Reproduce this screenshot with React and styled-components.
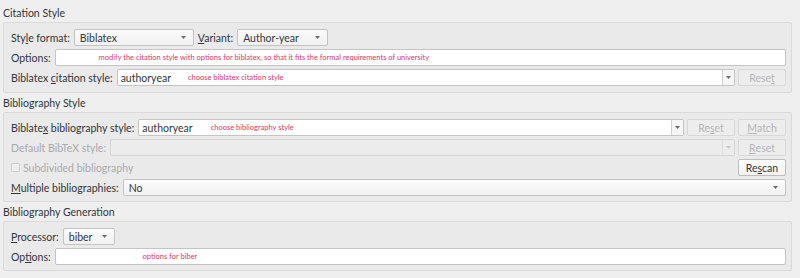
import React from 'react';
import styled, { createGlobalStyle } from 'styled-components';

const GlobalStyle = createGlobalStyle`
    body {
        margin: 0;
        background: #efefef;
        font-family: "Lato", "Noto Sans", sans-serif;
        font-size: 10.5px;
        color: #31363b;
    }
`

const Arrow = ({ disabled }) => (
    <svg width="5" height="3" viewBox="0 0 5 3">
        <path d="M0 0 L5 0 L2.5 3 Z" fill={disabled ? '#c8c8c8' : '#6a6a6a'} />
    </svg>
)

export default function App() {
    return (
        <Page>
            <GlobalStyle />
            <Title first>Citation Style</Title>
            <Group>
                <Row>
                    <Label>Sty<U>l</U>e format:</Label>
                    <Combo width={120}>
                        <span>Biblatex</span>
                        <Arrow />
                    </Combo>
                    <Label lead={1}><U>V</U>ariant:</Label>
                    <Combo width={91}>
                        <span>Author-year</span>
                        <Arrow />
                    </Combo>
                </Row>
                <Row>
                    <Label>Opt<U>i</U>ons:</Label>
                    <Edit>
                        <Hint offset={43}>modify the citation style with options for biblatex, so that it fits the formal requirements of university</Hint>
                    </Edit>
                </Row>
                <Row>
                    <Label>Biblatex <U>c</U>itation style:</Label>
                    <EditCombo>
                        <Value>authoryear</Value>
                        <Hint offset={17}>choose biblatex citation style</Hint>
                        <Drop><Arrow /></Drop>
                    </EditCombo>
                    <Button disabled>Rese<U>t</U></Button>
                </Row>
            </Group>

            <Title>Bibliography Style</Title>
            <Group>
                <Row>
                    <Label>Biblate<U>x</U> bibliography style:</Label>
                    <EditCombo>
                        <Value>authoryear</Value>
                        <Hint offset={18}>choose bibliography style</Hint>
                        <Drop><Arrow /></Drop>
                    </EditCombo>
                    <Button disabled>Re<U>s</U>et</Button>
                    <Button disabled><U>M</U>atch</Button>
                </Row>
                <Row>
                    <Label disabled>Default BibTeX style:</Label>
                    <EditCombo disabled>
                        <Drop disabled><Arrow disabled /></Drop>
                    </EditCombo>
                    <Button disabled><U>R</U>eset</Button>
                </Row>
                <Row>
                    <Check>
                        <Box />
                        <span>Subdivided bibliography</span>
                    </Check>
                    <Spacer />
                    <Button>Re<U>s</U>can</Button>
                </Row>
                <Row>
                    <Label><U>M</U>ultiple bibliographies:</Label>
                    <Combo grow>
                        <span>No</span>
                        <Arrow />
                    </Combo>
                </Row>
            </Group>

            <Title>Bibliography Generation</Title>
            <Group>
                <Row>
                    <Label><U>P</U>rocessor:</Label>
                    <Combo width={52}>
                        <span>biber</span>
                        <Arrow />
                    </Combo>
                </Row>
                <Row>
                    <Label>Op<U>t</U>ions:</Label>
                    <Edit>
                        <Hint offset={87}>options for biber</Hint>
                    </Edit>
                </Row>
            </Group>
        </Page>
    )
}

const Page = styled.div`
    width: 800px;
    height: 278px;
    padding: 0 8px 0 3px;
    box-sizing: border-box;
    display: flex;
    flex-direction: column;
`
const Title = styled.div`
    height: 19px;
    margin-top: ${props => props.first ? 3 : 0}px;
    display: flex;
    align-items: center;
    font-size: 10.5px;
`
const Group = styled.div`
    background: #eaeaea;
    border: 1px solid #dadada;
    border-radius: 2px;
    padding: 6px 5px 5px 7px;
    display: flex;
    flex-direction: column;
    gap: 3px;
    &:nth-of-type(2) {
        padding-bottom: 6px;
    }
`
const Row = styled.div`
    height: 17px;
    display: flex;
    align-items: center;
    gap: 3px;
`
const Label = styled.span`
    white-space: nowrap;
    margin-left: ${props => props.lead || 0}px;
    margin-right: 1px;
    color: ${props => props.disabled ? '#a9abad' : '#31363b'};
`
const U = styled.span`
    text-decoration: underline;
    text-underline-offset: 1px;
`
const Combo = styled.div`
    height: 17px;
    box-sizing: border-box;
    width: ${props => props.grow ? 'auto' : props.width + 'px'};
    flex: ${props => props.grow ? 1 : 'none'};
    border: 1px solid #c4c4c4;
    border-radius: 2px;
    background: linear-gradient(#fbfbfb, #f1f1f1);
    display: flex;
    align-items: center;
    justify-content: space-between;
    padding: 0 7px 0 5px;
`
const Edit = styled.div`
    flex: 1;
    height: 17px;
    box-sizing: border-box;
    border: 1px solid #c4c4c4;
    border-radius: 2px;
    background: #ffffff;
    display: flex;
    align-items: center;
`
const EditCombo = styled.div`
    flex: 1;
    height: 17px;
    box-sizing: border-box;
    border: 1px solid ${props => props.disabled ? '#d6d6d6' : '#c4c4c4'};
    border-radius: 2px;
    background: ${props => props.disabled ? '#ececec' : '#ffffff'};
    display: flex;
    align-items: center;
    padding-left: 3px;
`
const Value = styled.span`
    font-size: 10.5px;
    color: #31363b;
`
const Hint = styled.span`
    margin-left: ${props => props.offset}px;
    font-size: 7.5px;
    color: #e4336c;
    white-space: nowrap;
`
const Drop = styled.div`
    margin-left: auto;
    width: 11px;
    height: 100%;
    border-left: 1px solid ${props => props.disabled ? '#dedede' : '#d0d0d0'};
    background: ${props => props.disabled ? '#ececec' : '#f6f6f6'};
    display: flex;
    align-items: center;
    justify-content: center;
`
const Button = styled.div`
    width: 48px;
    height: 17px;
    box-sizing: border-box;
    border: 1px solid ${props => props.disabled ? '#d8d8d8' : '#bdbdbd'};
    border-radius: 2px;
    background: ${props => props.disabled ? '#ededed' : 'linear-gradient(#fdfdfd, #f3f3f3)'};
    color: ${props => props.disabled ? '#b4b6b8' : '#31363b'};
    display: flex;
    align-items: center;
    justify-content: center;
    flex: none;
`
const Check = styled.div`
    display: flex;
    align-items: center;
    gap: 3px;
    color: #a9abad;
`
const Box = styled.div`
    width: 9px;
    height: 9px;
    box-sizing: border-box;
    border: 1px solid #cfcfcf;
    border-radius: 1px;
    background: #eeeeee;
`
const Spacer = styled.div`
    flex: 1;
`
